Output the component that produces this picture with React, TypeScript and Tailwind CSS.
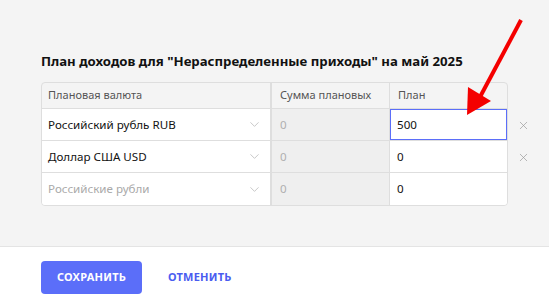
import { ChevronDown, X } from 'lucide-react';

const rows = [
  { currency: 'Российский рубль RUB', sum: '0', plan: '500', active: true, placeholder: false, removable: true },
  { currency: 'Доллар США USD', sum: '0', plan: '0', active: false, placeholder: false, removable: true },
  { currency: 'Российские рубли', sum: '0', plan: '0', active: false, placeholder: true, removable: false },
];

export default function App() {
  return (
    <div className="w-[549px] h-[307px] flex flex-col overflow-hidden bg-white font-['Noto_Sans',sans-serif]">
      <div className="relative h-[247px] shrink-0 bg-[#f4f4f4] border-b border-[#e4e4e4] pt-[52px] px-[41px]">
        <h1 className="text-[13.2px] leading-[19px] font-bold text-[#111]">
          План доходов для "Нераспределенные приходы" на май 2025
        </h1>

        <div className="mt-[11px] flex">
          <div className="w-[467px] shrink-0 rounded-[4px] border border-[#dedede] overflow-hidden">
            <div className="grid grid-cols-[230px_118px_117px] h-[26px] border-b border-[#dedede] text-[11px] text-[#555]">
              <div className="flex items-center px-[6px] border-r-2 border-[#dedede]">Плановая валюта</div>
              <div className="flex items-center px-[8px] border-r border-[#dedede]">Сумма плановых</div>
              <div className="flex items-center px-[8px]">План</div>
            </div>
            {rows.map((row, i) => (
              <div
                key={i}
                className={`grid grid-cols-[230px_118px_117px] h-[32px] text-[11.6px] ${i < rows.length - 1 ? 'border-b border-[#dedede]' : ''}`}
              >
                <div className="flex items-center justify-between bg-white pl-[6px] pr-[8px] border-r-2 border-[#dedede]">
                  <span className={row.placeholder ? 'text-[#a9a9a9]' : 'text-[#111]'}>{row.currency}</span>
                  <ChevronDown className="w-[15px] h-[15px] text-[#b5b5b5]" strokeWidth={1.2} />
                </div>
                <div className="flex items-center bg-[#efefef] px-[8px] text-[#b0b0b0] border-r border-[#dedede]">
                  {row.sum}
                </div>
                <div
                  className={`flex items-center bg-white px-[7px] text-[#111] ${row.active ? 'outline outline-1 outline-[#5b6ef9] -outline-offset-1' : ''}`}
                >
                  {row.plan}
                </div>
              </div>
            ))}
          </div>
          <div className="flex flex-col pt-[27px] pl-[8px]">
            {rows.map((row, i) => (
              <div key={i} className="h-[32px] w-[14px] flex items-center justify-center">
                {row.removable && <X className="w-[13px] h-[13px] text-[#9a9a9a]" strokeWidth={1.3} />}
              </div>
            ))}
          </div>
        </div>

        <svg className="absolute left-0 top-0 pointer-events-none" width="549" height="247">
          <line x1="521" y1="20" x2="480" y2="97" stroke="#f40000" strokeWidth="4" />
          <polygon points="467,115 468,87 491,101" fill="#f40000" />
        </svg>
      </div>

      <div className="flex items-center gap-[26px] px-[41px] pt-[14px]">
        <button className="h-[33px] w-[101px] rounded-[4px] bg-[#5b6ef9] text-white text-[11px] font-bold tracking-[0.02em]">
          СОХРАНИТЬ
        </button>
        <button className="text-[#4a5cf0] text-[11px] font-bold tracking-[0.02em]">ОТМЕНИТЬ</button>
      </div>
    </div>
  );
}
